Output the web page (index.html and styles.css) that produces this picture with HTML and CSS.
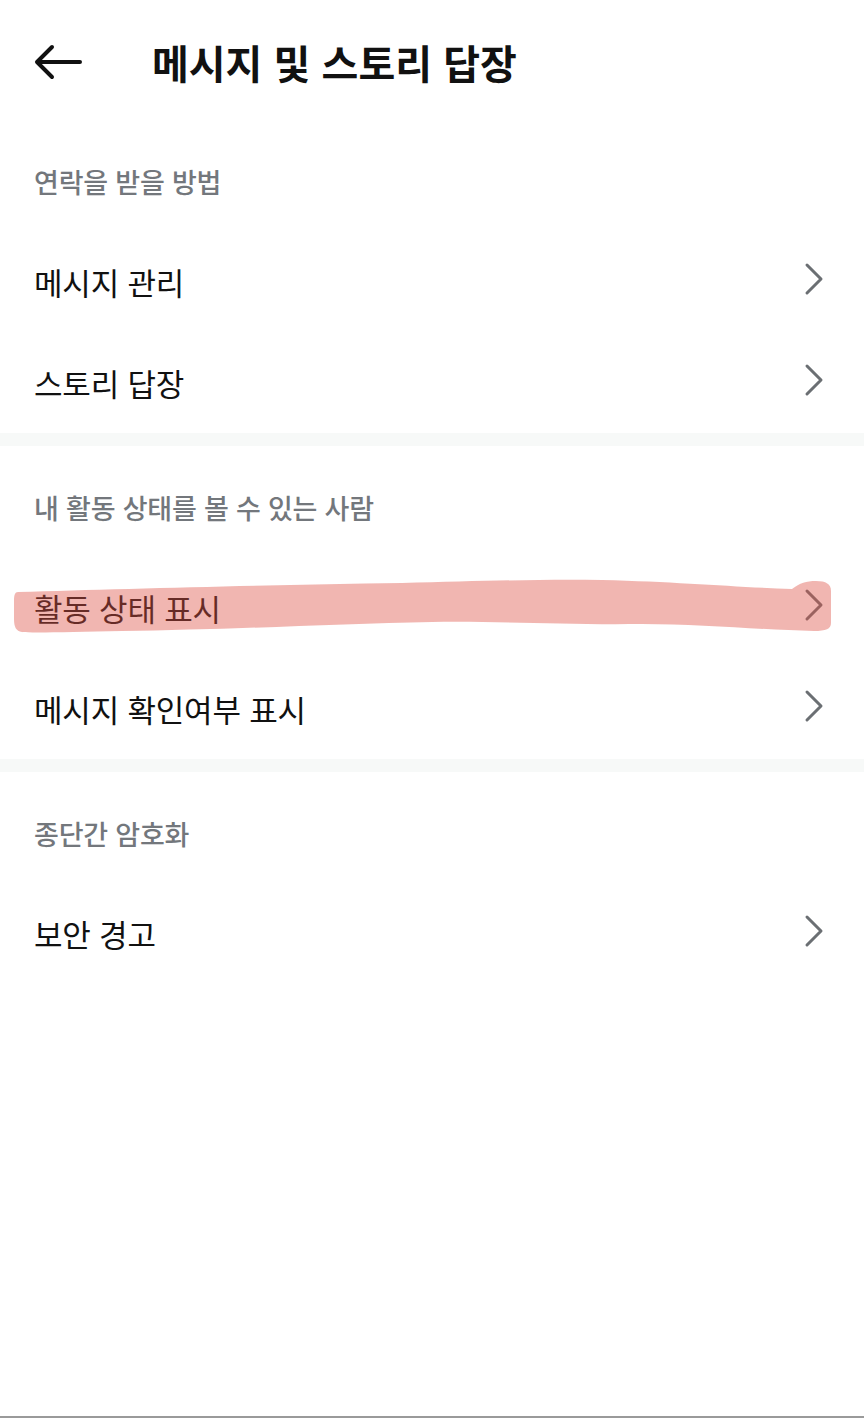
FILE: index.html
```html
<!DOCTYPE html>
<html lang="ko">
<head>
    <meta charset="UTF-8">
    <meta name="viewport" content="width=device-width, initial-scale=1.0">
    <title>메시지 및 스토리 답장</title>
    <link rel="stylesheet" href="styles.css">
</head>
<body>
    <div class="screen">
        <!-- Top bar -->
        <div class="topbar">
            <svg class="back" width="56" height="40" viewBox="0 0 56 40">
                <path d="M50 20 H8 M22 5 L7 20 L22 35" fill="none" stroke="#111" stroke-width="4" stroke-linecap="round" stroke-linejoin="round"/>
            </svg>
            <h1>메시지 및 스토리 답장</h1>
        </div>

        <!-- 연락을 받을 방법 -->
        <div class="section">
            <div class="section-title">연락을 받을 방법</div>
            <div class="item"><span>메시지 관리</span><svg class="chev" width="24" height="36" viewBox="0 0 24 36"><path d="M5 4 L19 18 L5 32" /></svg></div>
            <div class="item"><span>스토리 답장</span><svg class="chev" width="24" height="36" viewBox="0 0 24 36"><path d="M5 4 L19 18 L5 32" /></svg></div>
        </div>

        <div class="divider"></div>

        <!-- 내 활동 상태 -->
        <div class="section">
            <div class="section-title">내 활동 상태를 볼 수 있는 사람</div>
            <div class="item marked">
                <span>활동 상태 표시</span><svg class="chev" width="24" height="36" viewBox="0 0 24 36"><path d="M5 4 L19 18 L5 32" /></svg>
                <svg class="highlight" width="830" height="64" viewBox="0 0 830 64">
                    <path d="M16 15 C 120 12, 260 8, 400 6 C 480 4, 540 2, 600 3 C 680 5, 730 10, 790 12 C 798 6, 804 4, 814 4 C 824 4, 829 7, 829 14 L 829 46 C 829 52, 824 54, 812 54 C 760 53, 700 47, 640 47 C 560 48, 500 44, 430 45 C 330 47, 220 53, 120 54 C 70 55, 30 56, 20 55 C 14 54, 12 50, 12 42 L 12 24 C 12 18, 13 15, 16 15 Z" fill="#dd5046" fill-opacity="0.42"/>
                </svg>
            </div>
            <div class="item"><span>메시지 확인여부 표시</span><svg class="chev" width="24" height="36" viewBox="0 0 24 36"><path d="M5 4 L19 18 L5 32" /></svg></div>
        </div>

        <div class="divider"></div>

        <!-- 종단간 암호화 -->
        <div class="section">
            <div class="section-title">종단간 암호화</div>
            <div class="item"><span>보안 경고</span><svg class="chev" width="24" height="36" viewBox="0 0 24 36"><path d="M5 4 L19 18 L5 32" /></svg></div>
        </div>
    </div>
</body>
</html>
```

FILE: styles.css
```css
body {
    margin: 0;
    background-color: #fff;
    font-family: "Noto Sans CJK KR", "Noto Sans", sans-serif;
    color: #111;
}
.screen {
    height: 1418px;
    box-sizing: border-box;
    border-bottom: 2px solid #9a9a9a;
    overflow: hidden;
}
.topbar {
    height: 120px;
    display: flex;
    align-items: center;
    padding: 4px 0 0 30px;
    box-sizing: border-box;
}
.topbar h1 {
    margin: 0 0 0 66px;
    font-size: 40px;
    font-weight: 700;
    line-height: 48px;
}
.back {
    display: block;
}
.section-title {
    height: 111px;
    box-sizing: border-box;
    padding: 45px 0 0 34px;
    font-size: 27px;
    line-height: 34px;
    font-weight: 500;
    color: #73777c;
    letter-spacing: -0.2px;
}
.item {
    position: relative;
    height: 101px;
    display: flex;
    align-items: center;
    justify-content: space-between;
    padding: 0 38px 0 34px;
    font-size: 31px;
    letter-spacing: -0.2px;
}
.chev {
    display: block;
    margin-top: -6px;
}
.chev path {
    fill: none;
    stroke: #6b6f73;
    stroke-width: 3;
    stroke-linecap: round;
    stroke-linejoin: round;
}
.divider {
    height: 13px;
    background-color: #f7f9f8;
}
.highlight {
    position: absolute;
    left: 2px;
    top: 20px;
    pointer-events: none;
}
```
